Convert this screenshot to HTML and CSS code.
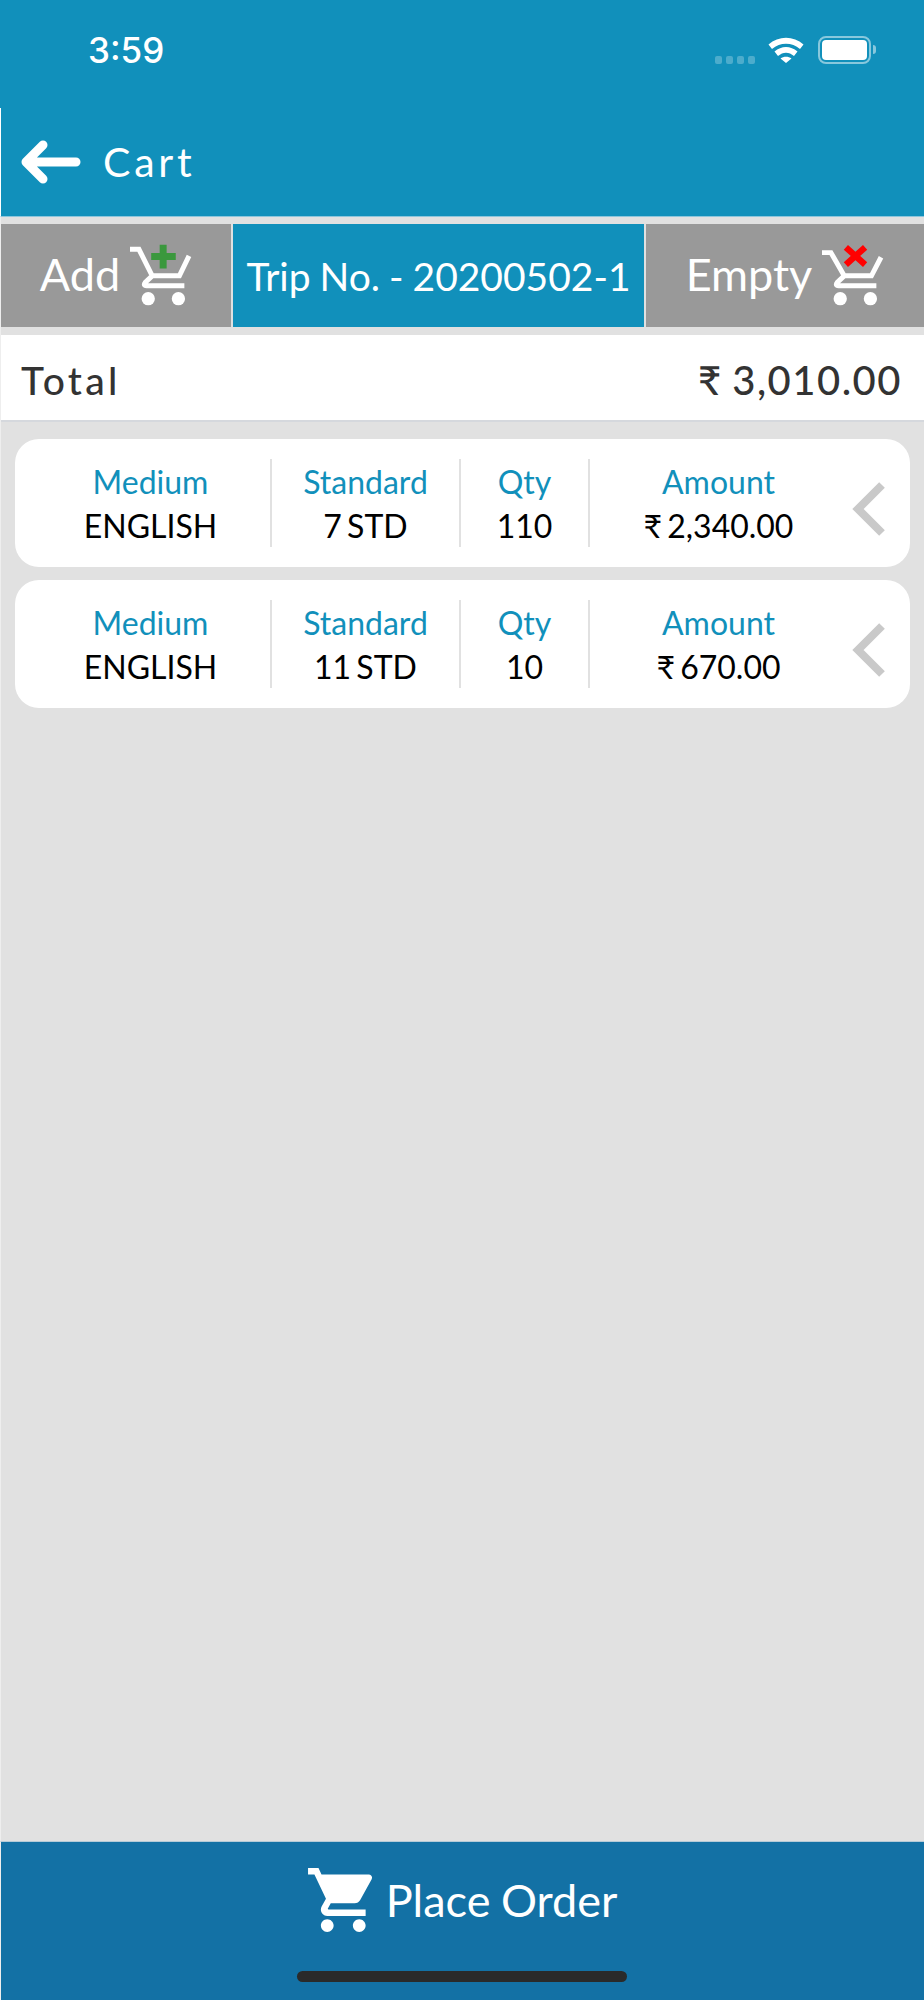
FILE: index.html
```html
<!DOCTYPE html>
<html lang="en">
<head>
<meta charset="utf-8">
<title>Cart</title>
<link rel="stylesheet" href="styles.css">
</head>
<body>
<div class="screen">
  <div class="status">
    <span class="time">3:59</span>
    <div class="status-icons">
      <div class="dots"><i></i><i></i><i></i><i></i></div>
      <svg class="wifi" viewBox="0 0 36 27"><path d="M0.5 8.5C10.5 -0.5 25.5 -0.5 35.5 8.5L32 13C24 6 12 6 4 13Z M6.5 15.5C13.5 9.5 22.5 9.5 29.5 15.5L26 20C21 15.5 15 15.5 10 20Z M12.5 22.5C15.5 20 20.5 20 23.5 22.5L18 27Z" fill="#fff"/></svg>
      <div class="battery"><div class="battery-fill"></div></div>
      <div class="battery-nib"></div>
    </div>
  </div>
  <header class="header">
    <svg class="back" viewBox="0 0 60 44"><path d="M55 22H6M22 5L5 22L22 39" fill="none" stroke="#fff" stroke-width="9" stroke-linecap="round" stroke-linejoin="round"/></svg>
    <span class="title">Cart</span>
  </header>
  <main class="main">
    <div class="toolbar">
      <div class="tool tool-add">
        <span class="tool-text">Add</span>
        <svg class="tool-cart" viewBox="55 52 190 190"><path d="M58 68H85L125 148H207L236 88M125 148L104 168Q97 178 108 178H222" fill="none" stroke="#fff" stroke-width="15"/><circle cx="113" cy="217" r="20" fill="#fff"/><circle cx="204" cy="217" r="20" fill="#fff"/><path d="M158 54V126M122 90H196" stroke="#3a983d" stroke-width="21"/></svg>
      </div>
      <div class="tool tool-trip">Trip No. - 20200502-1</div>
      <div class="tool tool-empty">
        <span class="tool-text">Empty</span>
        <svg class="tool-cart" viewBox="33 52 190 190"><path d="M36 78H63L103 148H185L214 92M103 148L82 168Q75 178 86 178H200" fill="none" stroke="#fff" stroke-width="15"/><circle cx="91" cy="217" r="20" fill="#fff"/><circle cx="182" cy="217" r="20" fill="#fff"/><path d="M108 62L166 114M166 62L108 114" stroke="#f00" stroke-width="19"/></svg>
      </div>
    </div>
    <div class="total">
      <span class="total-label">Total</span>
      <span class="total-value">₹ 3,010.00</span>
    </div>
    <div class="cards">
      <div class="card">
        <div class="col col-medium"><span class="label">Medium</span><span class="value">ENGLISH</span></div>
        <div class="col col-standard"><span class="label">Standard</span><span class="value">7 STD</span></div>
        <div class="col col-qty"><span class="label">Qty</span><span class="value">110</span></div>
        <div class="col col-amount"><span class="label">Amount</span><span class="value">₹ 2,340.00</span></div>
        <svg class="chev" viewBox="0 0 36 56"><path d="M31 4L7 28L31 52" fill="none" stroke="#c9c9c9" stroke-width="8"/></svg>
      </div>
      <div class="card">
        <div class="col col-medium"><span class="label">Medium</span><span class="value">ENGLISH</span></div>
        <div class="col col-standard"><span class="label">Standard</span><span class="value">11 STD</span></div>
        <div class="col col-qty"><span class="label">Qty</span><span class="value">10</span></div>
        <div class="col col-amount"><span class="label">Amount</span><span class="value">₹ 670.00</span></div>
        <svg class="chev" viewBox="0 0 36 56"><path d="M31 4L7 28L31 52" fill="none" stroke="#c9c9c9" stroke-width="8"/></svg>
      </div>
    </div>
  </main>
  <footer class="footer">
    <div class="place">
      <svg class="place-cart" viewBox="1 2 20.6 20"><path d="M7 18c-1.1 0-1.99.9-1.99 2S5.9 22 7 22s2-.9 2-2-.9-2-2-2zM1 2v2h2l3.6 7.59-1.35 2.45c-.16.28-.25.61-.25.96 0 1.1.9 2 2 2h12v-2H7.42c-.14 0-.25-.11-.25-.25l.03-.12.9-1.63h7.45c.75 0 1.41-.41 1.75-1.03l3.58-6.49c.08-.14.12-.31.12-.48 0-.55-.45-1-1-1H5.21l-.94-2H1zm16 16c-1.1 0-1.99.9-1.99 2s.89 2 1.99 2 2-.9 2-2-.9-2-2-2z" fill="#fff"/></svg>
      <span class="place-text">Place Order</span>
    </div>
    <div class="home"></div>
  </footer>
</div>
</body>
</html>
```
FILE: styles.css
```css
* { box-sizing: border-box; }
html, body { margin: 0; padding: 0; }
body { font-family: Lato, "Liberation Sans", sans-serif; background: #e1e1e1; }
.screen { width: 924px; height: 2000px; display: flex; flex-direction: column; overflow: hidden; }

.status { height: 108px; background: #1190bb; display: flex; justify-content: space-between; padding: 30px 48px 0 88px; }
.time { font-family: Inter, "Liberation Sans", sans-serif; font-weight: 500; font-size: 35px; line-height: 40px; color: #fff; }
.status-icons { display: flex; height: 28px; margin-top: 6px; align-items: flex-start; }
.dots { display: flex; gap: 3.5px; margin-top: 20px; margin-right: 13px; }
.dots i { width: 7.5px; height: 7.5px; border-radius: 2px; background: rgba(255,255,255,.25); }
.wifi { width: 36px; height: 27px; margin-right: 14px; }
.battery { width: 53px; height: 28px; border: 2px solid rgba(255,255,255,.5); border-radius: 8px; padding: 2px; }
.battery-fill { height: 100%; background: #fff; border-radius: 4px; }
.battery-nib { width: 3px; height: 9px; margin: 9px 0 0 2px; background: rgba(255,255,255,.5); border-radius: 0 3px 3px 0; }

.header { height: 109px; background: #1190bb; border-left: 1px solid #fff; border-bottom: 1px solid #8cc6dc; display: flex; align-items: center; padding: 0 0 0 20px; }
.back { width: 60px; height: 44px; margin-right: 22px; }
.title { font-size: 41px; letter-spacing: 3.8px; color: #fff; line-height: 50px; }

.main { flex: 1; display: flex; flex-direction: column; border-left: 1px solid #eee; }
.toolbar { height: 103px; margin-top: 7px; display: flex; gap: 2px; background: #e1e1e1; }
.tool { height: 100%; display: flex; align-items: center; justify-content: center; color: #fff; font-size: 45px; gap: 9px; }
.tool-text { padding-bottom: 4px; }
.tool-add { width: 230px; background: #999; }
.tool-trip { width: 411px; background: #1190bb; font-size: 39px; word-spacing: -1px; }
.tool-empty { flex: 1; background: #999; }
.tool-cart { width: 63px; height: 63px; }

.total { height: 87px; margin-top: 8px; background: #fff; border-bottom: 2px solid #d5d8dd; display: flex; justify-content: space-between; align-items: center; padding: 4px 22px 0 20px; color: #333; font-size: 39px; font-weight: 500; }
.total-label { letter-spacing: 3.3px; }
.total-value { font-size: 40px; letter-spacing: 1.5px; word-spacing: -2px; }

.cards { padding: 17px 14px 0 14px; display: flex; flex-direction: column; gap: 13px; }
.card { height: 128px; background: #fff; border-radius: 24px; display: flex; align-items: center; padding-left: 16px; }
.col { height: 88px; padding-top: 1px; display: flex; flex-direction: column; align-items: center; border-right: 2px solid #e1e1e1; }
.col-medium { width: 241px; }
.col-standard { width: 189px; }
.col-qty { width: 129px; }
.col-amount { width: 257px; border-right: 0; }
.label { font-size: 32px; line-height: 44px; color: #1190bb; }
.value { font-size: 32px; line-height: 44px; color: #000; word-spacing: -3px; }
.chev { width: 36px; height: 56px; margin: 12px 0 0 4px; }

.footer { height: 159px; background: #1371a5; border-top: 1px solid #b5cbd8; border-left: 1px solid #eee; position: relative; }
.place { display: flex; align-items: center; justify-content: center; gap: 12px; padding-top: 26px; color: #fff; font-size: 45px; }
.place-text { word-spacing: -1px; }
.place-cart { width: 66px; height: 64px; }
.home { position: absolute; left: 296px; top: 129px; width: 330px; height: 11px; border-radius: 6px; background: #2a2a2a; }
```
